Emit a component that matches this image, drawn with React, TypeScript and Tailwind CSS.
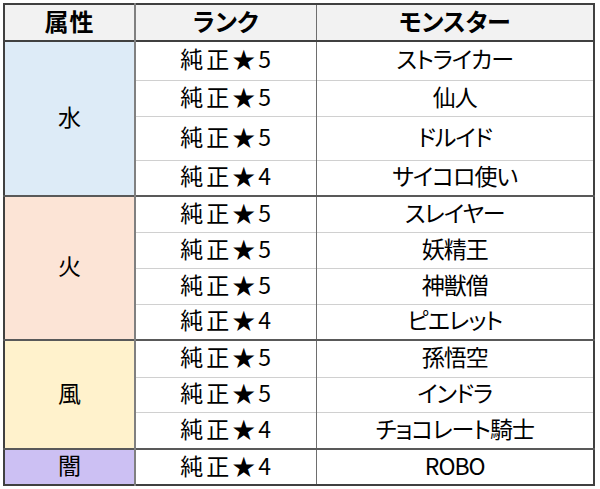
import { Fragment } from 'react'

interface Row {
  rank: string
  monster: string
  h: string
}

interface Group {
  name: string
  bg: string
  rows: Row[]
}

const groups: Group[] = [
  {
    name: '水',
    bg: 'bg-[#ddebf7]',
    rows: [
      { rank: '純正★5', monster: 'ストライカー', h: 'h-[39px]' },
      { rank: '純正★5', monster: '仙人', h: 'h-[36px]' },
      { rank: '純正★5', monster: 'ドルイド', h: 'h-[44px]' },
      { rank: '純正★4', monster: 'サイコロ使い', h: 'h-[36px]' },
    ],
  },
  {
    name: '火',
    bg: 'bg-[#fce4d6]',
    rows: [
      { rank: '純正★5', monster: 'スレイヤー', h: 'h-[36px]' },
      { rank: '純正★5', monster: '妖精王', h: 'h-[36px]' },
      { rank: '純正★5', monster: '神獣僧', h: 'h-[36px]' },
      { rank: '純正★4', monster: 'ピエレット', h: 'h-[36px]' },
    ],
  },
  {
    name: '風',
    bg: 'bg-[#fff2cc]',
    rows: [
      { rank: '純正★5', monster: '孫悟空', h: 'h-[37px]' },
      { rank: '純正★5', monster: 'インドラ', h: 'h-[35px]' },
      { rank: '純正★4', monster: 'チョコレート騎士', h: 'h-[37px]' },
    ],
  },
  {
    name: '闇',
    bg: 'bg-[#ccc0f3]',
    rows: [{ rank: '純正★4', monster: 'ROBO', h: 'h-[36px]' }],
  },
]

export default function App() {
  return (
    <div className="w-[600px] h-[489px] bg-white p-[3px] font-['Noto_Sans_CJK_JP',sans-serif] text-black [font-feature-settings:'palt']">
      <table className="w-[592px] border-collapse border-2 border-[#404040] text-[23px] leading-none">
        <thead>
          <tr className="h-[37px] bg-[#f2f2f2] border-b-2 border-[#404040] text-[24px]">
            <th className="w-[131px] border-r-2 border-[#808080] font-bold tracking-[1px] pb-[3px]">属性</th>
            <th className="w-[181px] border-r border-[#6e6e6e] font-bold pb-[3px]">ランク</th>
            <th className="font-bold pb-[3px]">モンスター</th>
          </tr>
        </thead>
        <tbody>
          {groups.map((g, gi) => (
            <Fragment key={g.name}>
              {g.rows.map((r, ri) => (
                <tr
                  key={ri}
                  className={
                    r.h +
                    (ri === 0 && gi > 0
                      ? ' border-t-2 border-[#595959]'
                      : ri > 0
                        ? ' border-t border-[#d0d0d0]'
                        : '')
                  }
                >
                  {ri === 0 && (
                    <td
                      rowSpan={g.rows.length}
                      className={'text-center align-middle border-r-2 border-[#808080] pb-[5px] ' + g.bg}
                    >
                      {g.name}
                    </td>
                  )}
                  <td className="text-center align-middle border-r border-[#6e6e6e] tracking-[3px] pl-[3px] pb-[4px]">{r.rank}</td>
                  <td className="text-center align-middle tracking-[-1px] pb-[4px]">{r.monster}</td>
                </tr>
              ))}
            </Fragment>
          ))}
        </tbody>
      </table>
    </div>
  )
}
